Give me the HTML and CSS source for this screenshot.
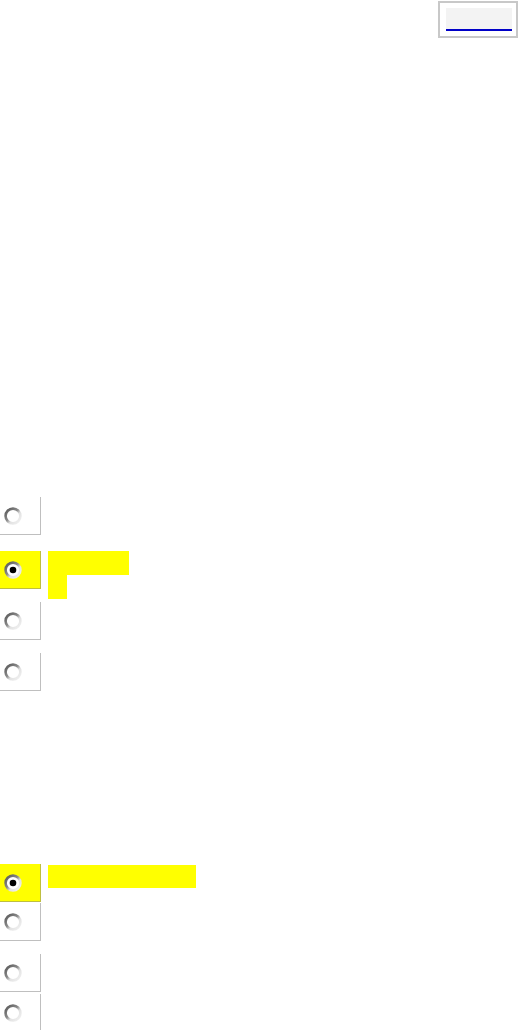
FILE: index.html
```html
<!DOCTYPE html>
<html>
<head>
<meta charset="utf-8">
<link rel="stylesheet" href="styles.css">
</head>
<body>
<div class="topbar">
  <div class="field-frame"><div class="field"></div></div>
</div>
<div class="list">
  <div class="row r1">
    <div class="box"><svg class="radio" viewBox="0 0 18 18" width="18" height="18"><defs><linearGradient id="g1" x1="0" y1="0" x2="1" y2="1"><stop offset="0" stop-color="#555"/><stop offset="0.45" stop-color="#8c8c8c"/><stop offset="0.62" stop-color="#e2e2e2"/><stop offset="1" stop-color="#f2f2f2"/></linearGradient></defs><circle cx="9" cy="9" r="7.4" fill="#fff" stroke="url(#g1)" stroke-width="2.6"/></svg></div>
  </div>
  <div class="row r2">
    <div class="box on"><svg class="radio" viewBox="0 0 18 18" width="18" height="18"><circle cx="9" cy="9" r="7.4" fill="#fff" stroke="url(#g1)" stroke-width="2.6"/><circle cx="9" cy="9" r="3.3" fill="#000"/></svg></div>
    <div class="label-wrap"><div class="hl w81"></div><div class="hl w19"></div></div>
  </div>
  <div class="row r3">
    <div class="box"><svg class="radio" viewBox="0 0 18 18" width="18" height="18"><circle cx="9" cy="9" r="7.4" fill="#fff" stroke="url(#g1)" stroke-width="2.6"/></svg></div>
  </div>
  <div class="row r4">
    <div class="box"><svg class="radio" viewBox="0 0 18 18" width="18" height="18"><circle cx="9" cy="9" r="7.4" fill="#fff" stroke="url(#g1)" stroke-width="2.6"/></svg></div>
  </div>
  <div class="row r5">
    <div class="box on"><svg class="radio" viewBox="0 0 18 18" width="18" height="18"><circle cx="9" cy="9" r="7.4" fill="#fff" stroke="url(#g1)" stroke-width="2.6"/><circle cx="9" cy="9" r="3.3" fill="#000"/></svg></div>
    <div class="label-wrap"><div class="hl w148"></div></div>
  </div>
  <div class="row r6">
    <div class="box"><svg class="radio" viewBox="0 0 18 18" width="18" height="18"><circle cx="9" cy="9" r="7.4" fill="#fff" stroke="url(#g1)" stroke-width="2.6"/></svg></div>
  </div>
  <div class="row r7">
    <div class="box"><svg class="radio" viewBox="0 0 18 18" width="18" height="18"><circle cx="9" cy="9" r="7.4" fill="#fff" stroke="url(#g1)" stroke-width="2.6"/></svg></div>
  </div>
  <div class="row r8">
    <div class="box"><svg class="radio" viewBox="0 0 18 18" width="18" height="18"><circle cx="9" cy="9" r="7.4" fill="#fff" stroke="url(#g1)" stroke-width="2.6"/></svg></div>
  </div>
</div>
</body>
</html>
```
FILE: styles.css
```css
html, body {
  margin: 0;
  padding: 0;
  background: #fff;
  font-family: "Liberation Sans", Arial, sans-serif;
}
.topbar {
  display: flex;
  justify-content: flex-end;
  padding-top: 1px;
  padding-right: 1px;
}
.field-frame {
  width: 66px;
  height: 28px;
  border: 2px solid #c8c8c8;
  padding: 5px 4px 0 6px;
}
.field {
  height: 21px;
  background: #f3f3f3;
  border-bottom: 2px solid #0000c8;
}
.list {
  display: flex;
  flex-direction: column;
  margin-top: 459px;
}
.row {
  display: flex;
  align-items: flex-start;
}
.r2 { margin-top: 16px; }
.r3 { margin-top: 3px; }
.r4 { margin-top: 13px; }
.r5 { margin-top: 173px; }
.r6 { margin-top: 1px; }
.r7 { margin-top: 13px; }
.r8 { margin-top: 2px; }
.box {
  width: 36px;
  height: 37px;
  padding-left: 4px;
  border-right: 1px solid rgba(128,128,128,0.5);
  border-bottom: 1px solid rgba(128,128,128,0.5);
  display: flex;
  align-items: center;
}
.box.on {
  background: #ffff00;
}
.radio {
  display: block;
}
.label-wrap {
  display: flex;
  flex-direction: column;
  margin-left: 7px;
}
.hl {
  height: 24px;
  background: #ffff00;
}
.w81 { width: 81px; }
.w19 { width: 19px; }
.w148 { width: 148px; height: 23px; margin-top: 1px; }
```
